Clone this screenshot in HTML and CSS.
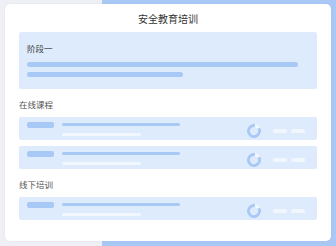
FILE: index.html
```html
<!DOCTYPE html>
<html lang="zh">
<head>
<meta charset="utf-8">
<link rel="stylesheet" href="styles.css">
</head>
<body>
<div class="backdrop"></div>
<div class="card">
  <div class="title">安全教育培训</div>
  <div class="stage">
    <div class="stage-name">阶段一</div>
    <div class="bar bar-long"></div>
    <div class="bar bar-short"></div>
  </div>
  <div class="section">在线课程</div>
  <div class="rows">
    <div class="row">
      <div class="thumb"></div>
      <div class="lines"><div class="line1"></div><div class="line2"></div></div>
      <svg class="ring" width="14" height="14" viewBox="0 0 14 14"><circle cx="7" cy="7" r="5.5" fill="none" stroke="#f2f7fe" stroke-width="3"/><circle cx="7" cy="7" r="5.5" fill="none" stroke="#a8c8f6" stroke-width="3" stroke-dasharray="29 40" transform="rotate(-30 7 7)"/></svg>
      <div class="pills"><span></span><span></span></div>
    </div>
    <div class="row">
      <div class="thumb"></div>
      <div class="lines"><div class="line1"></div><div class="line2"></div></div>
      <svg class="ring" width="14" height="14" viewBox="0 0 14 14"><circle cx="7" cy="7" r="5.5" fill="none" stroke="#f2f7fe" stroke-width="3"/><circle cx="7" cy="7" r="5.5" fill="none" stroke="#a8c8f6" stroke-width="3" stroke-dasharray="29 40" transform="rotate(-30 7 7)"/></svg>
      <div class="pills"><span></span><span></span></div>
    </div>
  </div>
  <div class="section">线下培训</div>
  <div class="rows">
    <div class="row">
      <div class="thumb"></div>
      <div class="lines"><div class="line1"></div><div class="line2"></div></div>
      <svg class="ring" width="14" height="14" viewBox="0 0 14 14"><circle cx="7" cy="7" r="5.5" fill="none" stroke="#f2f7fe" stroke-width="3"/><circle cx="7" cy="7" r="5.5" fill="none" stroke="#a8c8f6" stroke-width="3" stroke-dasharray="29 40" transform="rotate(-30 7 7)"/></svg>
      <div class="pills"><span></span><span></span></div>
    </div>
  </div>
</div>
</body>
</html>
```
FILE: styles.css
```css
html, body {
  margin: 0;
  padding: 0;
}
body {
  width: 336px;
  height: 246px;
  background: #eef0f5;
  position: relative;
  overflow: hidden;
  font-family: "Noto Sans CJK SC", "Noto Sans", sans-serif;
}
.backdrop {
  position: absolute;
  left: 102px;
  top: 0;
  right: 0;
  bottom: 0;
  background: #a9c8f6;
}
.card {
  position: relative;
  margin: 4px 0 0 5px;
  width: 326px;
  height: 237px;
  box-sizing: border-box;
  background: #fff;
  border-radius: 5px;
  padding: 8px 14px 0 14px;
  box-shadow: 0 0 2px rgba(120, 140, 170, 0.15);
}
.title {
  text-align: center;
  font-size: 10px;
  line-height: 14px;
  color: #333;
}
.stage {
  margin-top: 6px;
  height: 57px;
  box-sizing: border-box;
  background: #deebfc;
  border-radius: 2px;
  padding: 10px 8px 0 8px;
}
.stage-name {
  font-size: 8.5px;
  line-height: 12px;
  color: #444;
}
.bar {
  height: 5px;
  border-radius: 3px;
  background: #a8c8f6;
}
.bar-long {
  margin-top: 8px;
  width: 271px;
}
.bar-short {
  margin-top: 5px;
  width: 156px;
}
.section {
  margin-top: 9px;
  font-size: 8.5px;
  line-height: 12px;
  color: #555;
}
.rows {
  margin-top: 7px;
  display: flex;
  flex-direction: column;
  gap: 6px;
}
.row {
  height: 23px;
  box-sizing: border-box;
  background: #deebfc;
  border-radius: 2px;
  display: flex;
  align-items: flex-start;
  padding: 5px 0 0 8px;
}
.thumb {
  width: 27px;
  height: 6px;
  border-radius: 2px;
  background: #a8c8f6;
}
.lines {
  margin-left: 8px;
  margin-top: 1px;
  width: 118px;
}
.line1 {
  height: 3px;
  width: 118px;
  border-radius: 2px;
  background: #a8c8f6;
}
.line2 {
  margin-top: 7px;
  height: 3px;
  width: 79px;
  border-radius: 2px;
  background: #f2f7fe;
}
.ring {
  margin-left: 67px;
  margin-top: 2px;
  display: block;
}
.pills {
  display: flex;
  gap: 4px;
  margin-left: 12px;
  margin-top: 7px;
}
.pills span {
  display: block;
  width: 14px;
  height: 4px;
  border-radius: 2px;
  background: #f2f7fe;
}
```
